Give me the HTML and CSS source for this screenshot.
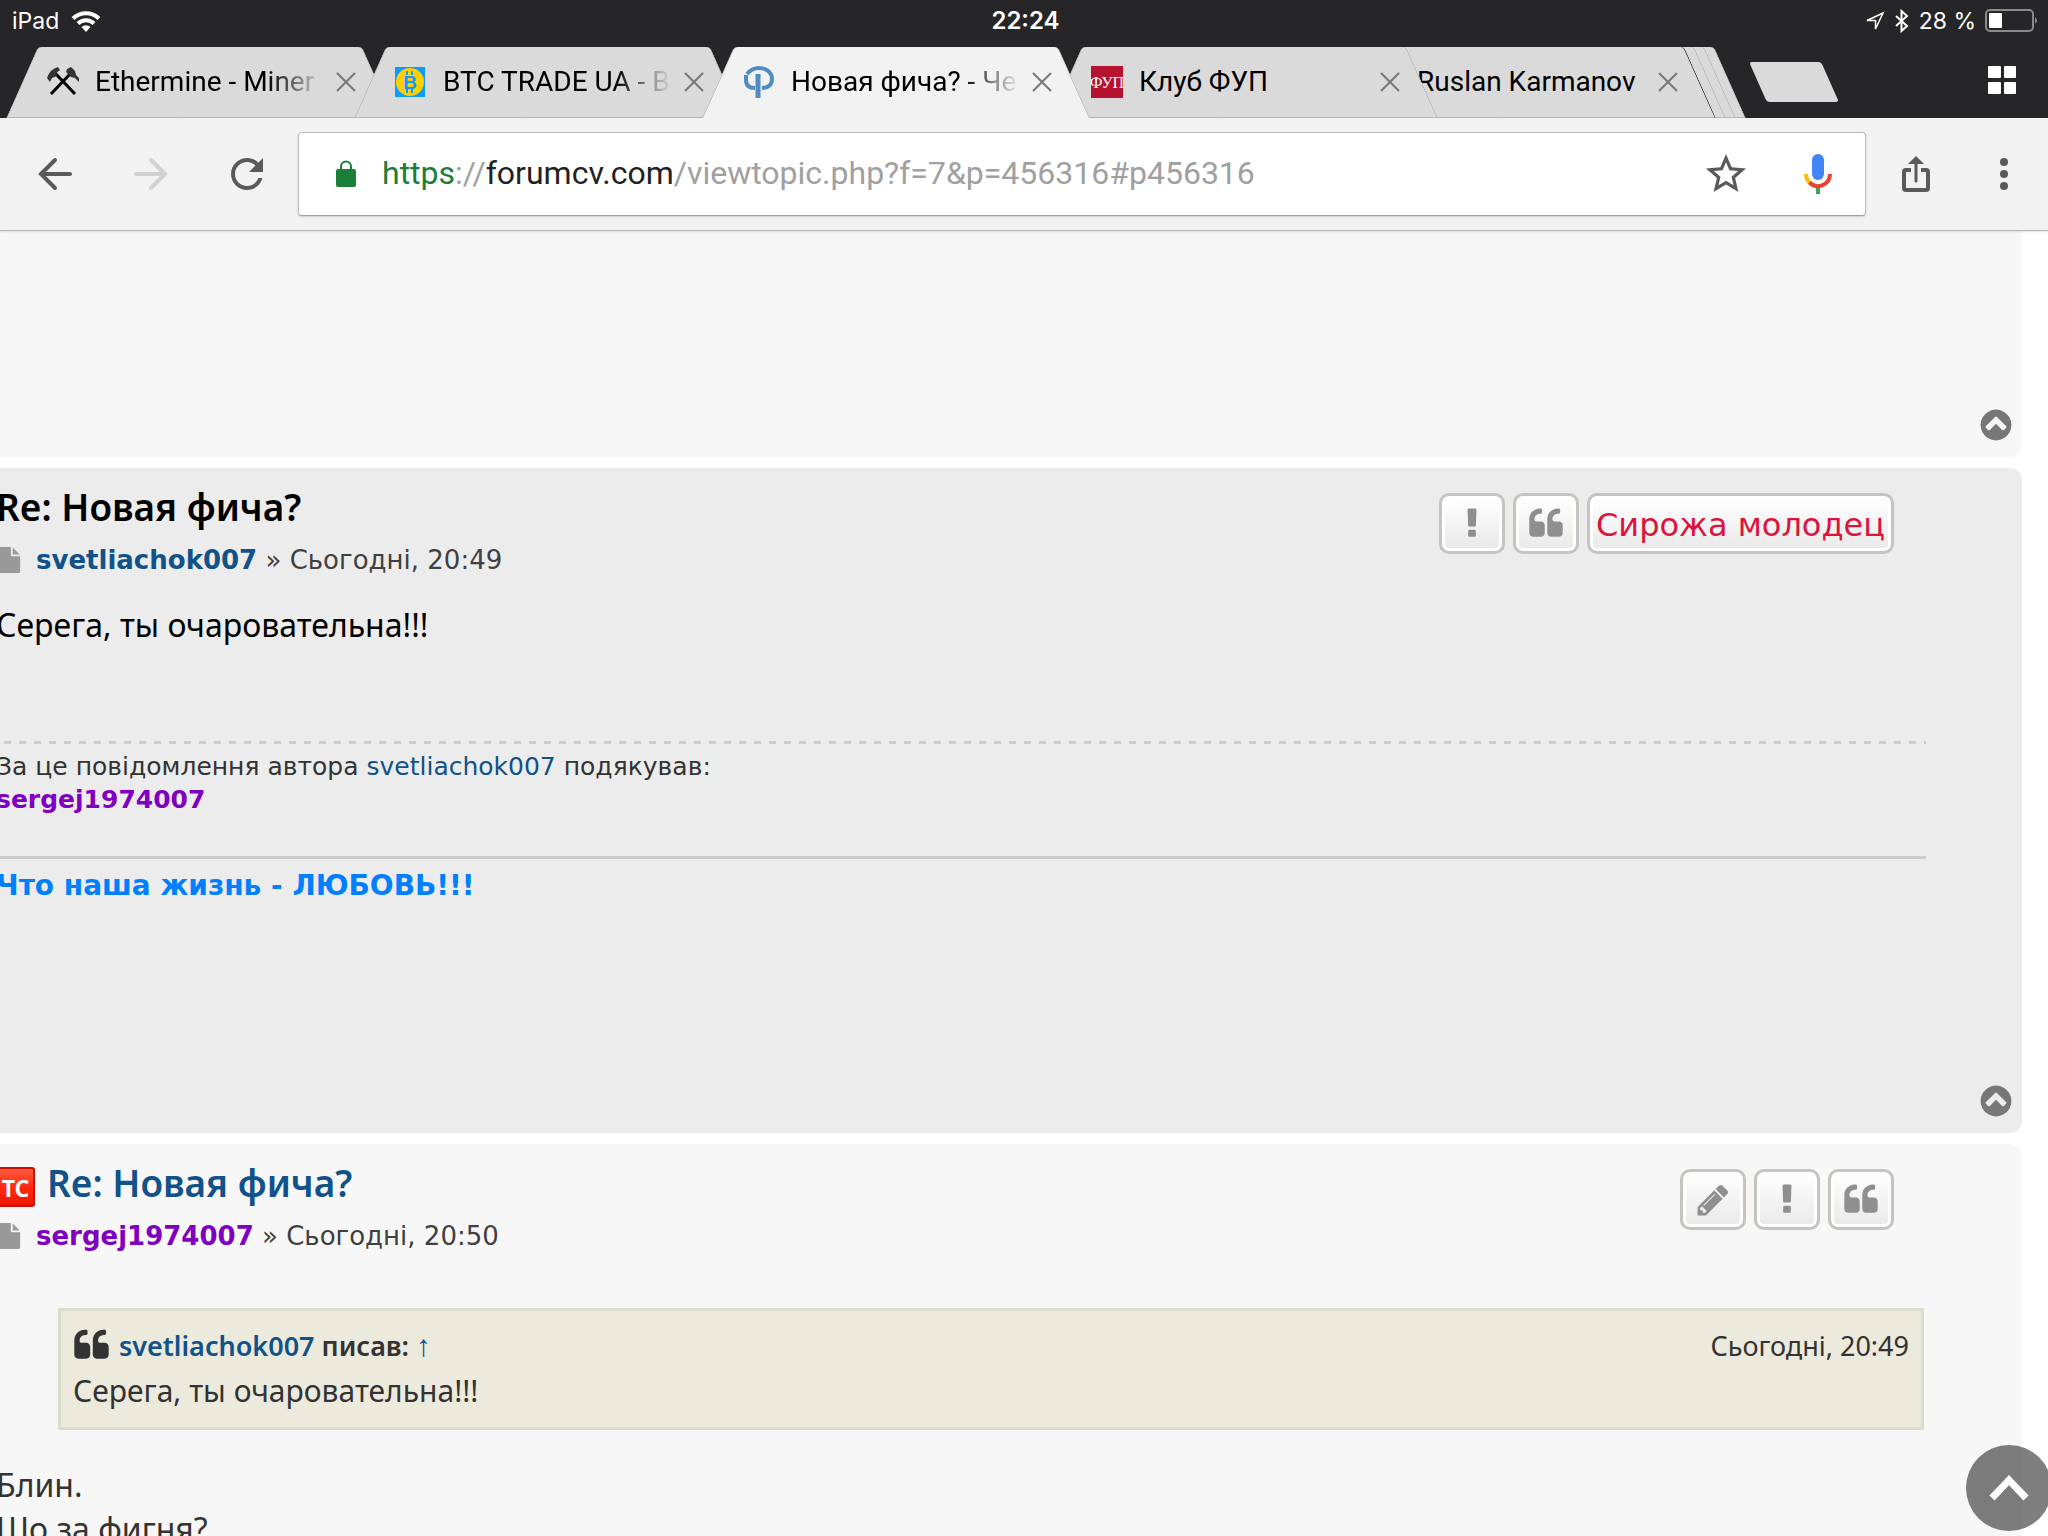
FILE: index.html
```html
<!DOCTYPE html>
<html lang="uk">
<head>
    <meta charset="UTF-8">
    <meta name="viewport" content="width=device-width, initial-scale=1.0">
    <title>Новая фича?</title>
    <link rel="stylesheet" href="styles.css">
</head>
<body>

    <!-- Shared icon shapes -->
    <svg class="sprite" aria-hidden="true">
        <symbol id="i-close" viewBox="0 0 20 20"><path d="M1 1l18 18M19 1L1 19" fill="none" stroke="currentColor" stroke-width="2"/></symbol>
        <symbol id="i-quote" viewBox="0 0 1792 1792"><path d="M832 960v384q0 80-56 136t-136 56h-384q-80 0-136-56t-56-136v-704q0-104 40.5-198.5t109.5-163.5 163.5-109.5 198.5-40.5h64q26 0 45 19t19 45v128q0 26-19 45t-45 19h-64q-106 0-181 75t-75 181v32q0 40 28 68t68 28h224q80 0 136 56t56 136zm896 0v384q0 80-56 136t-136 56h-384q-80 0-136-56t-56-136v-704q0-104 40.5-198.5t109.5-163.5 163.5-109.5 198.5-40.5h64q26 0 45 19t19 45v128q0 26-19 45t-45 19h-64q-106 0-181 75t-75 181v32q0 40 28 68t68 28h224q80 0 136 56t56 136z"/></symbol>
        <symbol id="i-report" viewBox="0 0 1792 1792"><path d="M1088 1248v224q0 26-19 45t-45 19h-256q-26 0-45-19t-19-45v-224q0-26 19-45t45-19h256q26 0 45 19t19 45zm30-1056l-28 768q-1 26-20.500 45t-45.500 19h-256q-26 0-45.500-19t-20.500-45l-28-768q-1-26 17.500-45t44.500-19h320q26 0 44.500 19t17.500 45z"/></symbol>
        <symbol id="i-edit" viewBox="0 0 1792 1792"><path d="M491 1536l91-91-235-235-91 91v107h128v128h107zm523-928q0-22-22-22-10 0-17 7l-542 542q-7 7-7 17 0 22 22 22 10 0 17-7l542-542q7-7 7-17zm-54-192l416 416-832 832h-416v-416zm683 96q0 53-37 90l-166 166-416-416 166-165q36-38 90-38 53 0 91 38l235 234q37 39 37 91z"/></symbol>
        <symbol id="i-file" viewBox="0 0 1792 1792"><path d="M1152 512v-472q22 14 36 28l408 408q14 14 28 36h-472zm-128 32q0 40 28 68t68 28h544v1056q0 40-28 68t-68 28h-1344q-40 0-68-28t-28-68v-1600q0-40 28-68t68-28h800v544z"/></symbol>
        <symbol id="i-up" viewBox="0 0 1792 1792"><path d="M1293 1139l102-102q19-19 19-45t-19-45l-454-454q-19-19-45-19t-45 19l-454 454q-19 19-19 45t19 45l102 102q19 19 45 19t45-19l307-307 307 307q19 19 45 19t45-19zm371-243q0 209-103 385.500t-279.500 279.500-385.500 103-385.500-103-279.500-279.500-103-385.500 103-385.500 279.500-279.500 385.500-103 385.500 103 279.500 279.500 103 385.500z"/></symbol>
    </svg>

    <!-- Status bar -->
    <div class="status-bar">
        <div class="status-left">
            <span>iPad</span>
            <svg width="30" height="22" viewBox="0 0 30 22" fill="none" stroke="#fff" stroke-width="4">
                <path d="M2 8.500A18.500 18.500 0 0 1 28 8.500"/>
                <path d="M7 13.500A11.500 11.500 0 0 1 23 13.500"/>
                <path d="M15 22l-4.500-5a6.500 6.500 0 0 1 9 0z" fill="#fff" stroke="none"/>
            </svg>
        </div>
        <div class="status-time">22:24</div>
        <div class="status-right">
            <svg width="20" height="20" viewBox="0 0 20 20"><path d="M18 2L2 9.500h8.500V18z" fill="none" stroke="#fff" stroke-width="1.500"/></svg>
            <svg width="16" height="24" viewBox="0 0 16 24"><path d="M2 7l11 10-5.500 5V2L13 7 2 17" fill="none" stroke="#fff" stroke-width="2"/></svg>
            <span>28 %</span>
            <svg width="54" height="24" viewBox="0 0 54 24">
                <rect x="1" y="1" width="47" height="21" rx="4" fill="none" stroke="#8a8a8c" stroke-width="2"/>
                <rect x="4" y="4" width="13" height="15" rx="1" fill="#fff"/>
                <path d="M50 8q4 3.500 0 7z" fill="#8a8a8c"/>
            </svg>
        </div>
    </div>

    <!-- Browser tabs -->
    <div class="tab-strip">
        <div class="tab tab-1">
            <svg class="favicon" viewBox="0 0 32 32">
                <path d="M4 28L24 7M28 28L8 7" stroke="#000" stroke-width="3" fill="none"/>
                <path d="M0 12q3-9 11-11l2 3-4 3 1 3-5 2-2 4zM20 3l4-2 4 4 1 4 3 3v4l-4-4-4-1-5-5z"/>
            </svg>
            <a href="#" class="tab-title">Ethermine - Miner</a>
            <button class="tab-close" aria-label="Close tab"><svg><use href="#i-close"/></svg></button>
        </div>
        <div class="tab tab-2">
            <svg class="favicon" viewBox="0 0 32 32">
                <rect width="30" height="30" y="1" fill="#0a9cff"/>
                <circle cx="15" cy="16" r="14" fill="#ffcf00"/>
                <path d="M12 5v4M17 5v4M12 23v4M17 23v4" stroke="#0a9cff" stroke-width="2"/>
                <text x="15" y="23" class="coin-letter">B</text>
            </svg>
            <a href="#" class="tab-title">BTC TRADE UA - B</a>
            <button class="tab-close" aria-label="Close tab"><svg><use href="#i-close"/></svg></button>
        </div>
        <div class="tab tab-3 tab-active">
            <svg class="favicon" viewBox="0 0 32 32" fill="none" stroke="#4f8cc4" stroke-width="4">
                <path d="M4 8Q9 2 16 2c8 0 13 5 13 11 0 6-4 9-10 9"/>
                <path d="M3 9v5q0 8 9 8"/>
                <path d="M15 8v24" stroke-width="5"/>
            </svg>
            <a href="#" class="tab-title">Новая фича? - Че</a>
            <button class="tab-close" aria-label="Close tab"><svg><use href="#i-close"/></svg></button>
        </div>
        <div class="tab tab-4">
            <svg class="favicon" viewBox="0 0 32 32">
                <rect width="32" height="32" fill="#b5122f"/>
                <text x="16" y="22" class="fup-letters">ФУП</text>
            </svg>
            <a href="#" class="tab-title">Клуб ФУП</a>
            <button class="tab-close" aria-label="Close tab"><svg><use href="#i-close"/></svg></button>
        </div>
        <div class="tab tab-5">
            <span class="favicon"></span>
            <a href="#" class="tab-title">Ruslan Karmanov</a>
            <button class="tab-close" aria-label="Close tab"><svg><use href="#i-close"/></svg></button>
        </div>
        <div class="tab tab-stacked tab-6"></div>
        <div class="tab tab-stacked tab-7"></div>
        <div class="tab tab-stacked tab-8"></div>
        <button class="new-tab" aria-label="New tab"></button>
        <button class="tab-grid" aria-label="All tabs">
            <svg width="28" height="28" viewBox="0 0 28 28">
                <rect width="13" height="12" rx="1"/><rect x="16" width="12" height="12" rx="1"/>
                <rect y="16" width="13" height="12" rx="1"/><rect x="16" y="16" width="12" height="12" rx="1"/>
            </svg>
        </button>
    </div>

    <!-- Toolbar -->
    <div class="toolbar">
        <button class="tool" aria-label="Back">
            <svg viewBox="0 0 48 48"><path d="M24 10L10 24l14 14M10 24h29" class="line"/></svg>
        </button>
        <button class="tool tool-off" aria-label="Forward" disabled>
            <svg viewBox="0 0 48 48"><path d="M24 10l14 14-14 14M38 24H9" class="line"/></svg>
        </button>
        <button class="tool" aria-label="Reload">
            <svg viewBox="0 0 24 24"><path d="M17.650 6.350C16.200 4.900 14.210 4 12 4c-4.420 0-7.990 3.580-7.990 8s3.570 8 7.990 8c3.730 0 6.840-2.550 7.730-6h-2.080c-.82 2.330-3.040 4-5.650 4-3.310 0-6-2.690-6-6s2.690-6 6-6c1.660 0 3.140.69 4.220 1.780L13 11h7V4z"/></svg>
        </button>
        <div class="omnibox">
            <svg class="lock" width="20" height="28" viewBox="0 0 20 28">
                <rect y="9" width="20" height="18" rx="2" fill="#1a8038"/>
                <path d="M5 10V6.500a5 5 0 0 1 10 0V10" fill="none" stroke="#1a8038" stroke-width="2"/>
            </svg>
            <div class="url">
                <label for="address"><span class="url-scheme">https</span>://<span class="url-host">forumcv.com</span>/viewtopic.php?f=7&amp;p=456316#p456316</label>
                <input type="text" id="address">
            </div>
            <button class="box-tool" aria-label="Bookmark">
                <svg width="48" height="48" viewBox="0 0 24 24"><path d="M22 9.240l-7.190-.62L12 2 9.190 8.630 2 9.240l5.460 4.730L5.820 21 12 17.270 18.180 21l-1.630-7.030L22 9.240zM12 15.400l-3.760 2.270 1-4.280-3.320-2.880 4.380-.38L12 6.100l1.710 4.040 4.380.38-3.320 2.880 1 4.280L12 15.400z"/></svg>
            </button>
            <button class="box-tool" aria-label="Voice search">
                <svg width="28" height="40" viewBox="0 0 28 40" fill="none" stroke-width="4">
                    <rect x="8" width="12" height="26" rx="6" fill="#4285f4"/>
                    <path d="M14 33v7" stroke="#34a853"/>
                    <path d="M2 20a12 12 0 0 0 4 9" stroke="#fbbc05"/>
                    <path d="M5.500 28.500A12 12 0 0 0 26 20" stroke="#ea4335"/>
                </svg>
            </button>
        </div>
        <button class="tool-end" aria-label="Share">
            <svg width="28" height="36" viewBox="0 0 28 36">
                <path d="M9 14H4q-2 0-2 2v16q0 2 2 2h20q2 0 2-2V16q0-2-2-2h-5" fill="none" stroke="currentColor" stroke-width="4"/>
                <path d="M14 6v19" stroke="currentColor" stroke-width="3" stroke-linecap="round"/>
                <path d="M14 0l8 8H6z"/>
            </svg>
        </button>
        <button class="tool-end" aria-label="Menu">
            <svg width="8" height="32" viewBox="0 0 8 32"><circle cx="4" cy="4" r="4"/><circle cx="4" cy="16" r="4"/><circle cx="4" cy="28" r="4"/></svg>
        </button>
    </div>

    <!-- Forum topic -->
    <main class="topic">
        <article class="post post-tail bg-light">
            <a href="#" class="post-top" aria-label="Догори"><svg><use href="#i-up"/></svg></a>
        </article>

        <article class="post bg-dark">
            <header class="post-header">
                <div>
                    <h3 class="post-title">Re: Новая фича?</h3>
                    <p class="post-author"><svg class="file-icon"><use href="#i-file"/></svg><a href="#" class="user">svetliachok007</a> » Сьогодні, 20:49</p>
                </div>
                <div class="post-buttons">
                    <button class="button" aria-label="Поскаржитись"><svg><use href="#i-report"/></svg></button>
                    <button class="button" aria-label="Цитата"><svg><use href="#i-quote"/></svg></button>
                    <button class="button button-text">Сирожа молодец</button>
                </div>
            </header>
            <div class="content content-new">Серега, ты очаровательна!!!</div>
            <div class="thanks">
                За це повідомлення автора <a href="#">svetliachok007</a> подякував:<br>
                <a href="#" class="user user-vip">sergej1974007</a>
            </div>
            <div class="signature">Что наша жизнь - ЛЮБОВЬ!!!</div>
            <a href="#" class="post-top" aria-label="Догори"><svg><use href="#i-up"/></svg></a>
        </article>

        <article class="post bg-light">
            <header class="post-header">
                <div>
                    <h3 class="post-title">
                        <span class="starter">TC</span>
                        <a href="#">Re: Новая фича?</a>
                    </h3>
                    <p class="post-author"><svg class="file-icon"><use href="#i-file"/></svg><a href="#" class="user user-vip">sergej1974007</a> » Сьогодні, 20:50</p>
                </div>
                <div class="post-buttons">
                    <button class="button" aria-label="Редагувати"><svg><use href="#i-edit"/></svg></button>
                    <button class="button" aria-label="Поскаржитись"><svg><use href="#i-report"/></svg></button>
                    <button class="button" aria-label="Цитата"><svg><use href="#i-quote"/></svg></button>
                </div>
            </header>
            <blockquote class="quote">
                <div class="quote-head">
                    <svg class="quote-icon"><use href="#i-quote"/></svg>
                    <cite><a href="#">svetliachok007</a> писав: <a href="#" class="quote-link">↑</a></cite>
                    <span class="quote-date">Сьогодні, 20:49</span>
                </div>
                <div class="quote-text">Серега, ты очаровательна!!!</div>
            </blockquote>
            <div class="content">Блин.<br>Шо за фигня?</div>
        </article>
    </main>

    <a href="#" class="scroll-up" aria-label="Догори">
        <svg width="40" height="28" viewBox="0 0 40 28"><path d="M3 24L20 6l17 18" fill="none" stroke="#fff" stroke-width="7"/></svg>
    </a>

</body>
</html>
```

FILE: styles.css
```css
* {
    box-sizing: border-box;
}

body {
    margin: 0;
    height: 100vh;
    display: flex;
    flex-direction: column;
    overflow: hidden;
    background: #fff;
    font-family: 'DejaVu Sans', Verdana, sans-serif;
    color: #333;
}

h3, p, blockquote {
    margin: 0;
}

a {
    color: #105289;
    text-decoration: none;
}

button {
    padding: 0;
    border: 0;
    background: none;
    color: inherit;
    cursor: pointer;
}

svg {
    display: block;
}

svg:not([fill]) {
    fill: currentColor;
}

.sprite {
    position: absolute;
    width: 0;
    height: 0;
}

/* Status bar */
.status-bar {
    flex: none;
    display: grid;
    grid-template-columns: 1fr auto 1fr;
    align-items: center;
    height: 47px;
    padding: 0 9px 6px 12px;
    background: #262628;
    color: #fff;
    font: 23px/28px Inter, sans-serif;
}

.status-left, .status-right {
    display: flex;
    align-items: center;
    gap: 12px;
}

.status-right {
    justify-content: flex-end;
    gap: 9px;
}

.status-time {
    font-size: 24px;
    font-weight: 600;
}

/* Tabs */
.tab-strip {
    flex: none;
    display: flex;
    align-items: center;
    height: 71px;
    padding: 0 32px 0 6px;
    background: #262628;
    font: 28px/36px Roboto, sans-serif;
}

.tab {
    flex: none;
    position: relative;
    display: flex;
    align-items: center;
    width: 388px;
    height: 71px;
    margin-right: -40px;
    padding: 0 38px 2px 41px;
}

/* Each half of a tab leans its own way */
.tab::before, .tab::after {
    content: '';
    position: absolute;
    z-index: -1;
    top: 0;
    bottom: 0;
    background: #dadada;
    border: 0 solid #b2b2b2;
    border-bottom-width: 1px;
}

.tab::before {
    left: 16px;
    right: 50%;
    border-left-width: 1px;
    border-top-left-radius: 4px;
    transform: skewX(-24deg);
}

.tab::after {
    left: 40%;
    right: 16px;
    border-right-width: 1px;
    border-top-right-radius: 4px;
    transform: skewX(24deg);
}

.tab-active::before, .tab-active::after {
    background: #f2f2f2;
    border-bottom-width: 0;
}

.tab-1 { z-index: 5; }
.tab-2 { z-index: 6; }
.tab-3 { z-index: 7; }
.tab-4 { z-index: 5; margin-right: -110px; }
.tab-5 { z-index: 4; margin-right: -378px; }
.tab-6 { z-index: 3; }
.tab-7 { z-index: 2; }
.tab-8 { z-index: 1; }

.tab-5::after {
    border-right-color: #262628;
}

.tab-stacked {
    margin-right: -378px;
}

.tab-8 {
    margin-right: 0;
}

.favicon {
    flex: none;
    width: 32px;
    height: 32px;
    margin-right: 16px;
}

.coin-letter {
    font: bold 19px 'Liberation Sans', sans-serif;
    text-anchor: middle;
    fill: #0a9cff;
}

.fup-letters {
    font: 16px 'Liberation Serif', serif;
    text-anchor: middle;
    fill: #fff;
}

.tab-title {
    flex: 1;
    overflow: hidden;
    white-space: nowrap;
    color: #000;
    mask-image: linear-gradient(to right, #000 75%, transparent);
}

.tab-4 .tab-title, .tab-5 .tab-title {
    mask-image: none;
}

.tab-close {
    margin-left: 12px;
    color: #777;
}

.tab-close svg {
    width: 20px;
    height: 20px;
}

.new-tab {
    width: 72px;
    height: 40px;
    margin: 0 0 2px 12px;
    border-radius: 3px;
    background: #dadada;
    transform: skewX(24deg);
}

.tab-grid {
    margin: 0 0 6px auto;
    color: #fff;
}

/* Toolbar */
.toolbar {
    flex: none;
    position: relative;
    z-index: 1;
    display: flex;
    align-items: center;
    height: 113px;
    padding: 0 0 0 7px;
    background: #f2f2f2;
    border-bottom: 1px solid #b6b6b6;
    box-shadow: 0 1px 2px rgba(0, 0, 0, 0.12);
    color: #5a5a5a;
}

.tool {
    width: 96px;
}

.tool svg {
    width: 48px;
    height: 48px;
    margin: 0 auto;
}

.tool-off {
    color: #d2d2d2;
}

.line {
    fill: none;
    stroke: currentColor;
    stroke-width: 4;
    stroke-linecap: round;
}

.tool-end {
    width: 88px;
}

.tool-end svg {
    margin: 0 auto;
}

.omnibox {
    flex: 1;
    display: flex;
    align-items: center;
    height: 84px;
    margin: 0 6px 0 3px;
    padding: 0 1px 0 37px;
    background: #fff;
    border: 1px solid #bdbdbd;
    border-bottom-color: #a2a2a2;
    border-radius: 4px;
    box-shadow: 0 1px 2px rgba(0, 0, 0, 0.15);
}

.url {
    flex: 1;
    position: relative;
    margin-left: 26px;
    padding-bottom: 2px;
    font: 32px/40px Roboto, sans-serif;
    color: #a0a0a0;
}

.url input {
    position: absolute;
    inset: 0;
    width: 100%;
    border: 0;
    background: transparent;
    font: inherit;
}

.url-scheme {
    color: #1a8038;
}

.url-host {
    color: #222;
}

.box-tool {
    width: 92px;
}

.box-tool svg {
    margin: 0 auto;
}

/* Topic, panned a little to the left */
.topic {
    flex: 1;
    min-height: 0;
    margin-left: -4px;
    padding-right: 26px;
    overflow: hidden;
}

.post {
    position: relative;
    min-height: 665px;
    margin-bottom: 11px;
    padding: 15px 96px 0 0;
    border-radius: 0 12px 12px 0;
}

.post-tail {
    min-height: 226px;
    border-top-right-radius: 0;
}

.bg-light {
    background: #f7f7f7;
}

.bg-dark {
    background: #ececec;
}

.post-header {
    display: flex;
    justify-content: space-between;
    align-items: flex-start;
}

.post-title {
    display: flex;
    align-items: flex-end;
    gap: 12px;
    font: 600 37px/48px 'Noto Sans', sans-serif;
    color: #000;
}

.post-author {
    display: flex;
    align-items: center;
    margin-top: 11px;
    font-size: 26px;
    line-height: 36px;
    color: #404040;
    white-space: pre;
}

.file-icon {
    width: 26px;
    height: 26px;
    margin-right: 14px;
    color: #999;
}

.user {
    font-weight: bold;
}

.user-vip {
    color: #8000bf;
}

.starter {
    width: 39px;
    height: 40px;
    border: 2px solid #c41208;
    border-radius: 3px;
    background: linear-gradient(#ff5a3c, #ff2a14 50%, #f01800);
    color: #fff;
    font: bold 23px/38px 'Noto Sans', sans-serif;
    text-align: center;
}

.post-buttons {
    display: flex;
    gap: 8px;
    margin: 10px 32px 0 0;
}

.button {
    display: flex;
    align-items: center;
    justify-content: center;
    width: 66px;
    height: 61px;
    border: 3px solid #c7c3bf;
    border-radius: 10px;
    background: linear-gradient(#fff, #e9e9e9);
    box-shadow: inset 0 0 0 3px #fff;
    color: #8f8f8f;
}

.button svg {
    width: 36px;
    height: 36px;
}

.button-text {
    width: auto;
    padding: 2px 6px 0;
    font: 32px/40px 'DejaVu Sans', Verdana, sans-serif;
    color: #dc143c;
}

.content {
    margin-top: 33px;
    font: 32px/44px 'Noto Sans', sans-serif;
}

.content-new {
    margin-top: 25px;
    color: #000;
}

.thanks {
    margin-top: 94px;
    padding-top: 9px;
    background: repeating-linear-gradient(to right, transparent 0 8px, #ccc 8px 15px) top / 100% 3px no-repeat;
    font-size: 25px;
    line-height: 33px;
}

.signature {
    margin-top: 40px;
    padding-top: 9px;
    border-top: 3px solid #ccc;
    font-size: 28px;
    line-height: 36px;
    font-weight: bold;
    color: #0080ff;
}

.post-top {
    position: absolute;
    right: 8px;
    bottom: 14px;
    color: #777;
}

.post-top svg {
    width: 36px;
    height: 36px;
}

.quote {
    margin: 54px 2px 0 62px;
    padding: 12px 12px 14px;
    background: #ebeadd;
    border: 3px solid #dcdccb;
    font: 27px/45px 'Noto Sans', sans-serif;
}

.quote-head {
    display: flex;
    align-items: center;
    height: 45px;
}

.quote-icon {
    width: 37px;
    height: 37px;
    margin-right: 9px;
}

cite {
    font-style: normal;
    font-weight: 600;
}

.quote-link {
    font: 30px/30px 'Liberation Sans', sans-serif;
}

.quote-date {
    margin-left: auto;
}

.quote-text {
    font-size: 30px;
}

/* Floating button */
.scroll-up {
    position: fixed;
    right: -4px;
    bottom: 5px;
    display: flex;
    align-items: center;
    justify-content: center;
    width: 86px;
    height: 86px;
    border-radius: 50%;
    background: rgba(0, 0, 0, 0.5);
}
```
